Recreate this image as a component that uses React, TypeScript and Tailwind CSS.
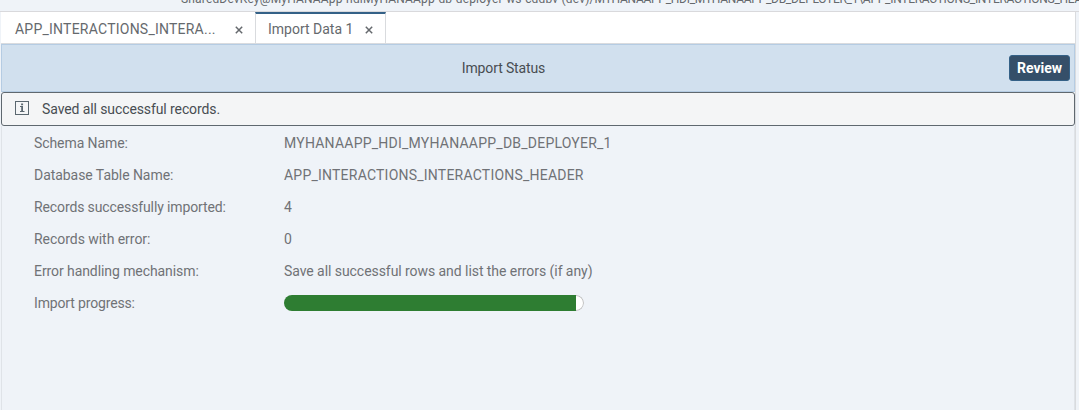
import type { ReactNode } from "react";

function Tab({ className, gap, children }: { className: string; gap: string; children: ReactNode }) {
  return (
    <div className={`flex h-full shrink-0 items-center text-sm text-[#65696d] ${className}`}>
      <span className="whitespace-nowrap">{children}</span>
      <svg className={`mt-[2px] size-2 shrink-0 ${gap}`} viewBox="0 0 8 8" fill="none" stroke="#65696d" strokeWidth="1.5">
        <path d="M.8.8l6.4 6.4M7.2.8.8 7.2" />
      </svg>
    </div>
  );
}

function Row({ label, labelClass, children }: { label: string; labelClass: string; children: ReactNode }) {
  return (
    <div className="flex h-8 items-center text-sm">
      <div className={`w-[250px] shrink-0 whitespace-nowrap ${labelClass}`}>{label}</div>
      {children}
    </div>
  );
}

export default function App() {
  return (
    <div className="flex h-[410px] w-[1079px] flex-col overflow-hidden bg-[#eff3f8] font-['Roboto',sans-serif] text-[#707276]">
      <div className="flex h-3 shrink-0 items-end overflow-hidden border-b border-[#d9d9dc] pl-[181px]">
        <div className="mb-[4px] whitespace-nowrap text-xs leading-4 text-[#65696d]">
          <span className="tracking-[0.17px]">SharedDevKey@MyHANAApp-hdiMyHANAApp-db-deployer-ws-cddbv (dev)/</span>
          <span className="tracking-[-0.27px]">MYHANAAPP_HDI_MYHANAAPP_DB_DEPLOYER_1\APP_INTERACTIONS_INTERACTIONS_HEADER</span>
        </div>
      </div>
      <div className="ml-px flex w-[1075px] grow flex-col border-r border-[#d9dbde]">
        <div className="flex h-8 shrink-0 border-b border-[#d9dbde] bg-white">
          <Tab className="w-[254px] pt-[3px] pl-[14px]" gap="ml-[18px]">
            <span className="block w-[202px] tracking-[0.23px]">APP_INTERACTIONS_INTERA...</span>
          </Tab>
          <Tab className="w-[131px] border-x border-t-2 border-x-[#d9dbde] border-t-[#346187] pt-px pl-3" gap="ml-[10px]">
            <span className="block w-[87px]">Import Data 1</span>
          </Tab>
        </div>
        <div className="flex h-12 shrink-0 items-center border border-[#b5cce3] bg-[#d1e0ee] pr-1 text-sm text-[#484d52]">
          <div className="w-[1003px] text-center tracking-[-0.13px]">Import Status</div>
          <button className="ml-auto h-[26px] w-[61px] rounded-[3px] border border-[#346187] bg-[#354f69] text-sm font-bold leading-6 text-white">Review</button>
        </div>
        <div className="flex h-[34px] shrink-0 items-center rounded-[3px] border border-[#5f686f] bg-[#f4f5f6] pl-[13px] text-sm text-[#484d52]">
          <svg className="mb-[2px] mr-[13px] size-[14px]" viewBox="0 0 14 14" fill="none" stroke="#5a676f">
            <rect x=".5" y=".5" width="13" height="13" />
            <path d="M5 5.5h2.5v5M5 10.5h4.5" />
            <path d="M7.1 5v5.5M6.1 3.3h2" strokeWidth="1.8" />
          </svg>
          <span className="tracking-[-0.1px]">Saved all successful records.</span>
        </div>
        <div className="grow border-x border-[#dfe3e8] pl-8 pt-px">
          <Row label="Schema Name:" labelClass="tracking-[-0.08px]"><span className="tracking-[0.23px]">MYHANAAPP_HDI_MYHANAAPP_DB_DEPLOYER_1</span></Row>
          <Row label="Database Table Name:" labelClass="tracking-[-0.05px]"><span className="tracking-[0.22px]">APP_INTERACTIONS_INTERACTIONS_HEADER</span></Row>
          <Row label="Records successfully imported:" labelClass="tracking-[-0.12px]">4</Row>
          <Row label="Records with error:" labelClass="tracking-[-0.04px]">0</Row>
          <Row label="Error handling mechanism:" labelClass="tracking-[-0.08px]"><span className="tracking-[-0.06px]">Save all successful rows and list the errors (if any)</span></Row>
          <Row label="Import progress:" labelClass="tracking-[-0.15px]">
            <div className="flex h-4 w-[300px] overflow-hidden rounded-full">
              <div className="w-[292px] bg-[#2e7d32]" />
              <div className="w-2 rounded-r-full border border-l-0 border-[#bfbfbf] bg-white" />
            </div>
          </Row>
        </div>
      </div>
    </div>
  );
}
